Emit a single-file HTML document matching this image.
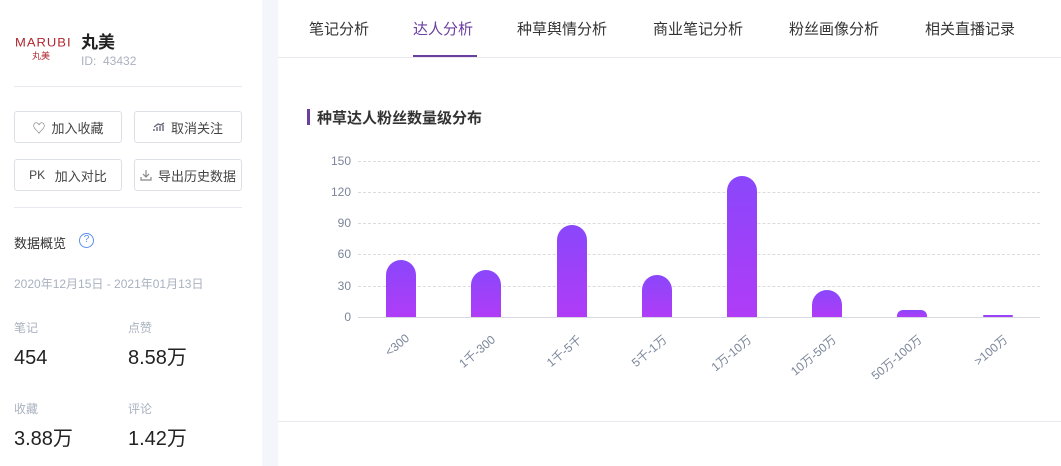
<!DOCTYPE html>
<html><head><meta charset="utf-8"><style>
*{margin:0;padding:0;box-sizing:border-box}
body{width:1061px;height:466px;overflow:hidden;background:#fff;font-family:"Liberation Sans","Noto Sans CJK SC",sans-serif;position:relative;color:#333}
.a{position:absolute;white-space:nowrap}
.btn{position:absolute;width:108px;height:32px;border:1px solid #dcdfe6;border-radius:3px;font-size:13px;color:#444;display:flex;align-items:center;justify-content:center;gap:6px}
.tab{position:absolute;top:18px;font-size:15px;color:#333}
.yl{position:absolute;right:710px;font-size:12px;color:#7a8599}
.grid{position:absolute;left:358px;width:682px;border-top:1px dashed #dcdcdc}
.bar{position:absolute;width:30px;border-radius:15px 15px 0 0;background:linear-gradient(#8a47fb,#b03cf7)}
.xl{position:absolute;top:331px;font-size:12px;color:#7a8599;transform-origin:right top;transform:rotate(-40deg)}
.num{font-size:20px;color:#222;line-height:24px;height:24px}
.lb{font-size:12px;color:#a9b1bf;line-height:16px}
</style></head><body>
<div class="a" style="left:262px;top:0;width:16px;height:466px;background:#f3f6fa"></div>
<div class="a" style="left:15px;top:35px;font-size:13px;color:#b0262f;letter-spacing:1px;transform:scaleY(0.9)">MARUBI</div>
<div class="a" style="left:32px;top:49px;font-size:9px;color:#b0262f">丸美</div>
<div class="a" style="left:81px;top:28px;font-size:17px;font-weight:bold;color:#222">丸美</div>
<div class="a" style="left:81px;top:54px;font-size:12px;color:#a9b1bf">ID:&nbsp; 43432</div>
<div class="a" style="left:14px;top:86px;width:228px;border-top:1px solid #e8e8ee"></div>
<div class="btn" style="left:14px;top:111px"><span style="color:#666">♡</span>加入收藏</div>
<div class="btn" style="left:134px;top:111px"><svg width="12" height="10" viewBox="0 0 12 10"><path d="M1 9v-2M4 9v-4M7 9v-5M10 9v-6M1 5l4-3 3 1 3-2" stroke="#667" stroke-width="1.4" fill="none"/></svg>取消关注</div>
<div class="btn" style="left:14px;top:159px"><span style="font-size:12px">PK</span>&nbsp;加入对比</div>
<div class="btn" style="left:134px;top:159px"><svg width="12" height="12" viewBox="0 0 12 12"><path d="M6 1v7M3 5l3 3 3-3M1 8v3h10V8" stroke="#888" stroke-width="1.2" fill="none"/></svg>导出历史数据</div>
<div class="a" style="left:14px;top:207px;width:228px;border-top:1px solid #e8e8ee"></div>
<div class="a" style="left:14px;top:233px;font-size:13px;color:#333">数据概览</div>
<div class="a" style="left:79px;top:233px;width:15px;height:15px;border:1.5px solid #5b8ef0;border-radius:50%;font-size:10px;color:#5b8ef0;text-align:center;line-height:12px">?</div>
<div class="a lb" style="left:14px;top:276px">2020年12月15日 - 2021年01月13日</div>
<div class="a lb" style="left:14px;top:320px">笔记</div>
<div class="a lb" style="left:128px;top:320px">点赞</div>
<div class="a num" style="left:14px;top:346px">454</div>
<div class="a num" style="left:128px;top:346px">8.58万</div>
<div class="a lb" style="left:14px;top:401px">收藏</div>
<div class="a lb" style="left:128px;top:401px">评论</div>
<div class="a num" style="left:14px;top:427px">3.88万</div>
<div class="a num" style="left:128px;top:427px">1.42万</div>

<div class="tab" style="left:309px">笔记分析</div>
<div class="tab" style="left:413px;color:#6a3fa0">达人分析</div>
<div class="a" style="left:413px;top:55px;width:64px;height:2px;background:#6a3fa0"></div>
<div class="tab" style="left:517px">种草舆情分析</div>
<div class="tab" style="left:653px">商业笔记分析</div>
<div class="tab" style="left:789px">粉丝画像分析</div>
<div class="tab" style="left:925px">相关直播记录</div>
<div class="a" style="left:278px;top:57px;width:783px;border-top:1px solid #e8e8ee"></div>

<div class="a" style="left:307px;top:109px;width:3px;height:16px;background:#6a3fa0"></div>
<div class="a" style="left:317px;top:107px;font-size:15px;font-weight:bold;color:#333">种草达人粉丝数量级分布</div>

<div class="grid" style="top:161px"></div><div class="yl" style="top:154px">150</div>
<div class="grid" style="top:192px"></div><div class="yl" style="top:185px">120</div>
<div class="grid" style="top:223px"></div><div class="yl" style="top:216px">90</div>
<div class="grid" style="top:254px"></div><div class="yl" style="top:247px">60</div>
<div class="grid" style="top:286px"></div><div class="yl" style="top:279px">30</div>
<div class="yl" style="top:310px">0</div>
<div class="a" style="left:358px;top:317px;width:682px;border-top:1px solid #d8d8e0"></div>

<div class="bar" style="left:386px;top:260px;height:57px"></div>
<div class="bar" style="left:471px;top:270px;height:47px"></div>
<div class="bar" style="left:557px;top:225px;height:92px"></div>
<div class="bar" style="left:642px;top:275px;height:42px"></div>
<div class="bar" style="left:727px;top:176px;height:141px"></div>
<div class="bar" style="left:812px;top:290px;height:27px"></div>
<div class="bar" style="left:897px;top:310px;height:7px;border-radius:6px 6px 0 0"></div>
<div class="bar" style="left:983px;top:315px;height:2px;border-radius:1px"></div>

<div class="xl" style="right:658px">&lt;300</div>
<div class="xl" style="right:573px">1千-300</div>
<div class="xl" style="right:487px">1千-5千</div>
<div class="xl" style="right:402px">5千-1万</div>
<div class="xl" style="right:317px">1万-10万</div>
<div class="xl" style="right:232px">10万-50万</div>
<div class="xl" style="right:147px">50万-100万</div>
<div class="xl" style="right:61px">&gt;100万</div>

<div class="a" style="left:278px;top:421px;width:783px;border-top:1px solid #e8e8ee"></div>
</body></html>
